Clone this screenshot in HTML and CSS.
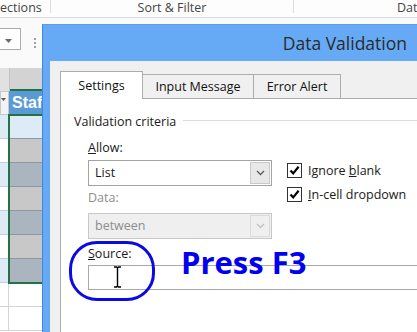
FILE: index.html
```html
<!DOCTYPE html>
<html>
<head>
<meta charset="utf-8">
<link rel="stylesheet" href="styles.css">
</head>
<body>
<div class="topbar">
  <span class="grp g1">ections</span>
  <span class="sep"></span>
  <span class="grp g2">Sort &amp; Filter</span>
  <span class="sep"></span>
  <span class="grp g3">Dat</span>
</div>
<div class="ribbon">
  <div class="dd"><svg width="7" height="4" viewBox="0 0 7 4"><path d="M0 0H7L3.5 4Z" fill="#6b6b6b"/></svg></div>
  <div class="dots"></div>
</div>
<div class="colheads">
  <div class="ch-a"></div>
  <div class="ch-b"></div>
</div>
<div class="sheet">
  <div class="row hdr">
    <div class="ca filt"><svg width="5" height="3" viewBox="0 0 5 3"><path d="M0 0H5L2.5 3Z" fill="#555"/></svg></div>
    <div class="cb thead">Staf</div>
  </div>
  <div class="row"><div class="ca band"></div><div class="cb band"></div></div>
  <div class="row"><div class="ca"></div><div class="cb g1c"></div></div>
  <div class="row"><div class="ca band"></div><div class="cb g2c"></div></div>
  <div class="row"><div class="ca"></div><div class="cb g1c"></div></div>
  <div class="row"><div class="ca band"></div><div class="cb g2c"></div></div>
  <div class="row"><div class="ca"></div><div class="cb g1c"></div></div>
  <div class="row"><div class="ca band"></div><div class="cb g2c"></div></div>
  <div class="row plain"><div class="ca"></div><div class="cb"></div></div>
  <div class="row plain"><div class="ca"></div><div class="cb"></div></div>
</div>
<div class="selection"></div>

<div class="dialog">
  <div class="titlebar">Data Validation</div>
  <div class="dbody">
    <div class="tabs">
      <div class="tab active">Settings</div>
      <div class="tab t-input">Input Message</div>
      <div class="tab t-error">Error Alert</div>
    </div>
    <div class="panel">
      <div class="legend"><span>Validation criteria</span><span class="rule"></span></div>
      <div class="form">
        <div class="lbl l-allow"><u>A</u>llow:</div>
        <div class="combo c-allow"><span class="val">List</span><span class="btn"><svg width="9" height="6" viewBox="0 0 9 6"><path d="M1 1L4.5 4.5L8 1" fill="none" stroke="#5a5a5a" stroke-width="1.3"/></svg></span></div>
        <div class="checks">
          <div class="chk"><span class="box"><svg width="13" height="13" viewBox="0 0 13 13"><path d="M2.5 6.5L5.2 9.4L10.6 2.8" fill="none" stroke="#000" stroke-width="2.2"/></svg></span><span>Ignore <u>b</u>lank</span></div>
          <div class="chk"><span class="box"><svg width="13" height="13" viewBox="0 0 13 13"><path d="M2.5 6.5L5.2 9.4L10.6 2.8" fill="none" stroke="#000" stroke-width="2.2"/></svg></span><span><u>I</u>n-cell dropdown</span></div>
        </div>
        <div class="lbl l-data dis">Data:</div>
        <div class="combo c-data dis"><span class="val">between</span><span class="btn"><svg width="9" height="6" viewBox="0 0 9 6"><path d="M1 1L4.5 4.5L8 1" fill="none" stroke="#c2c2c2" stroke-width="1.3"/></svg></span></div>
        <div class="lbl l-src"><u>S</u>ource:</div>
        <div class="src"></div>
      </div>
    </div>
  </div>
</div>

<div class="circle"></div>
<div class="press">Press F3</div>
<svg class="ibeam" width="9" height="22" viewBox="0 0 9 22"><path d="M1 1H3.5L4.5 2L5.5 1H8M4.5 2V20M1 21H3.5L4.5 20L5.5 21H8" fill="none" stroke="#000" stroke-width="1.4"/></svg>
</body>
</html>
```

FILE: styles.css
```css
* { box-sizing: border-box; }
html, body { margin: 0; padding: 0; }
body {
  width: 417px;
  height: 332px;
  overflow: hidden;
  position: relative;
  background: #ffffff;
  font-family: "Open Sans", "Noto Sans", sans-serif;
  font-size: 12px;
  color: #1a1a1a;
}

/* ribbon group labels */
.topbar {
  height: 18px;
  display: flex;
  align-items: flex-start;
  border-bottom: 1px solid #dadada;
  background: #fdfdfd;
  color: #444;
  font-size: 12.5px;
  line-height: 15px;
  white-space: nowrap;
}
.grp { display: block; overflow: hidden; }
.g1 { width: 50px; }
.g2 { width: 242px; text-align: center; }
.g3 { flex: 1; padding-left: 103px; }
.sep { width: 1px; height: 13px; background: #dadada; flex: none; }

.ribbon {
  height: 50px;
  background: #fafafa;
  display: flex;
  align-items: flex-start;
  padding-top: 10px;
}
.dd {
  width: 21px;
  height: 22px;
  border: 1px solid #ababab;
  border-left: none;
  background: #fff;
  display: flex;
  align-items: center;
  padding-left: 5px;
  padding-top: 3px;
}
.dots {
  width: 2px;
  height: 10px;
  margin: 10px 0 0 13px;
  border-left: 2px dotted #a0a0a0;
}

.colheads {
  height: 23px;
  display: flex;
  background: #e1e1e1;
}
.ch-a { width: 10px; border-right: 1px solid #c4c4c4; }
.ch-b { flex: 1; background: #d3d3d3; border-bottom: 2px solid #217346; }

.sheet { display: flex; flex-direction: column; }
.row { height: 24px; display: flex; flex: none; }
.ca {
  width: 9px;
  border-bottom: 1px solid #bcd0e4;
  border-right: 1px solid #bcd0e4;
  background: #fff;
}
.cb { flex: 1; border-bottom: 1px solid #8b98a5; }
.band { background: #ddebf7; }
.g1c { background: #c8c8c8; }
.g2c { background: #aab5bf; }
.row.plain .ca, .row.plain .cb { background: #fff; border-color: #d4d4d4; }
.filt {
  background: #f3f3f3;
  border: 1px solid #c8c8c8;
  display: flex;
  align-items: flex-start;
  justify-content: center;
  padding-top: 6px;
  padding-right: 2px;
}
.thead {
  background: #5b9bd5;
  color: #fff;
  font-family: "Liberation Sans", sans-serif;
  font-weight: 700;
  font-size: 16px;
  line-height: 24px;
  padding-left: 3px;
  border-bottom: none;
  overflow: hidden;
}

.selection {
  position: absolute;
  left: 8px;
  top: 114px;
  width: 40px;
  height: 170px;
  border: 2px solid #217346;
}

/* dialog */
.dialog {
  position: absolute;
  left: 42px;
  top: 24px;
  width: 375px;
  height: 308px;
  background: #66a9f4;
  border-left: 1px solid #3f86dc;
  border-top: 1px solid #5b9eea;
  padding-left: 7px;
  display: flex;
  flex-direction: column;
  overflow: hidden;
}
.titlebar {
  height: 36px;
  flex: none;
  display: flex;
  align-items: center;
  justify-content: flex-end;
  padding-right: 10px;
  padding-bottom: 1px;
  font-size: 17.5px;
  color: #2b2b2b;
}
.dbody {
  flex: 1;
  background: #f0f0f0;
  padding: 10px 0 0 10px;
  display: flex;
  flex-direction: column;
  min-width: 0;
}
.tabs { display: flex; align-items: flex-end; height: 27px; flex: none; }
.tab {
  height: 24px;
  border: 1px solid #adadad;
  border-bottom: none;
  background: #f0f0f0;
  display: flex;
  align-items: center;
  justify-content: center;
  font-size: 12.5px;
  color: #111;
}
.tab.active {
  width: 83px;
  height: 28px;
  background: #fff;
  position: relative;
  z-index: 1;
  margin-bottom: -1px;
}
.t-input { width: 111px; border-left: none; }
.t-error { width: 87px; border-left: none; }

.panel {
  flex: 1;
  background: #fff;
  border-top: 1px solid #adadad;
  border-left: 1px solid #adadad;
  padding: 15px 0 0 13px;
  min-width: 0;
}
.legend {
  display: flex;
  align-items: center;
  height: 16px;
  line-height: 16px;
  font-size: 12.5px;
}
.rule {
  flex: 1;
  height: 1px;
  background: #dcdcdc;
  margin-left: 7px;
  margin-bottom: 3px;
}
.form {
  margin-left: 14px;
  display: grid;
  grid-template-columns: 184px 1fr;
  column-gap: 15px;
  align-items: start;
}
.lbl { grid-column: 1; height: 16px; line-height: 16px; font-size: 12.5px; }
.dis { color: #8d8d8d; }
.l-allow { margin-top: 10px; grid-row: 1; }
.c-allow { margin-top: 4px; grid-row: 2; }
.l-data { margin-top: 4px; grid-row: 3; }
.c-data { margin-top: 7px; grid-row: 4; }
.l-src { margin-top: 7px; grid-row: 5; }

.combo {
  grid-column: 1;
  height: 26px;
  border: 1px solid #a3a3a3;
  background: #fff;
  display: flex;
  align-items: stretch;
  font-size: 12.5px;
}
.combo .val { flex: 1; padding-left: 6px; line-height: 24px; }
.combo .btn {
  width: 20px;
  margin: 1px;
  border: 1px solid #c9c9c9;
  background: #e8e8e8;
  display: flex;
  align-items: center;
  justify-content: center;
}
.combo.dis { background: #efefef; border-color: #c8c8c8; }
.combo.dis .btn { background: #efefef; border-color: #dadada; }

.checks { grid-column: 2; grid-row: 2 / 5; margin-top: 6px; }
.chk {
  display: flex;
  align-items: center;
  height: 24px;
  font-size: 12.5px;
  gap: 6px;
  margin-top: -4px;
  white-space: nowrap;
}
.chk + .chk { margin-top: 0; }
.box {
  width: 15px;
  height: 15px;
  border: 1px solid #333;
  background: #fff;
  display: flex;
  align-items: center;
  justify-content: center;
  flex: none;
}

.src {
  grid-column: 1 / -1;
  grid-row: 6;
  margin-top: 3px;
  height: 25px;
  border: 1px solid #a8a8a8;
  border-right: none;
  background: #fff;
}

/* annotations */
.circle {
  position: absolute;
  left: 69px;
  top: 241px;
  width: 86px;
  height: 60px;
  border: 3px solid #0a0ae6;
  border-radius: 28px;
}
.press {
  position: absolute;
  left: 181px;
  top: 247px;
  font-family: "Open Sans", sans-serif;
  font-weight: 700;
  font-size: 31px;
  line-height: 31px;
  color: #0000f0;
  white-space: nowrap;
}
.ibeam {
  position: absolute;
  left: 113px;
  top: 266px;
}
```
